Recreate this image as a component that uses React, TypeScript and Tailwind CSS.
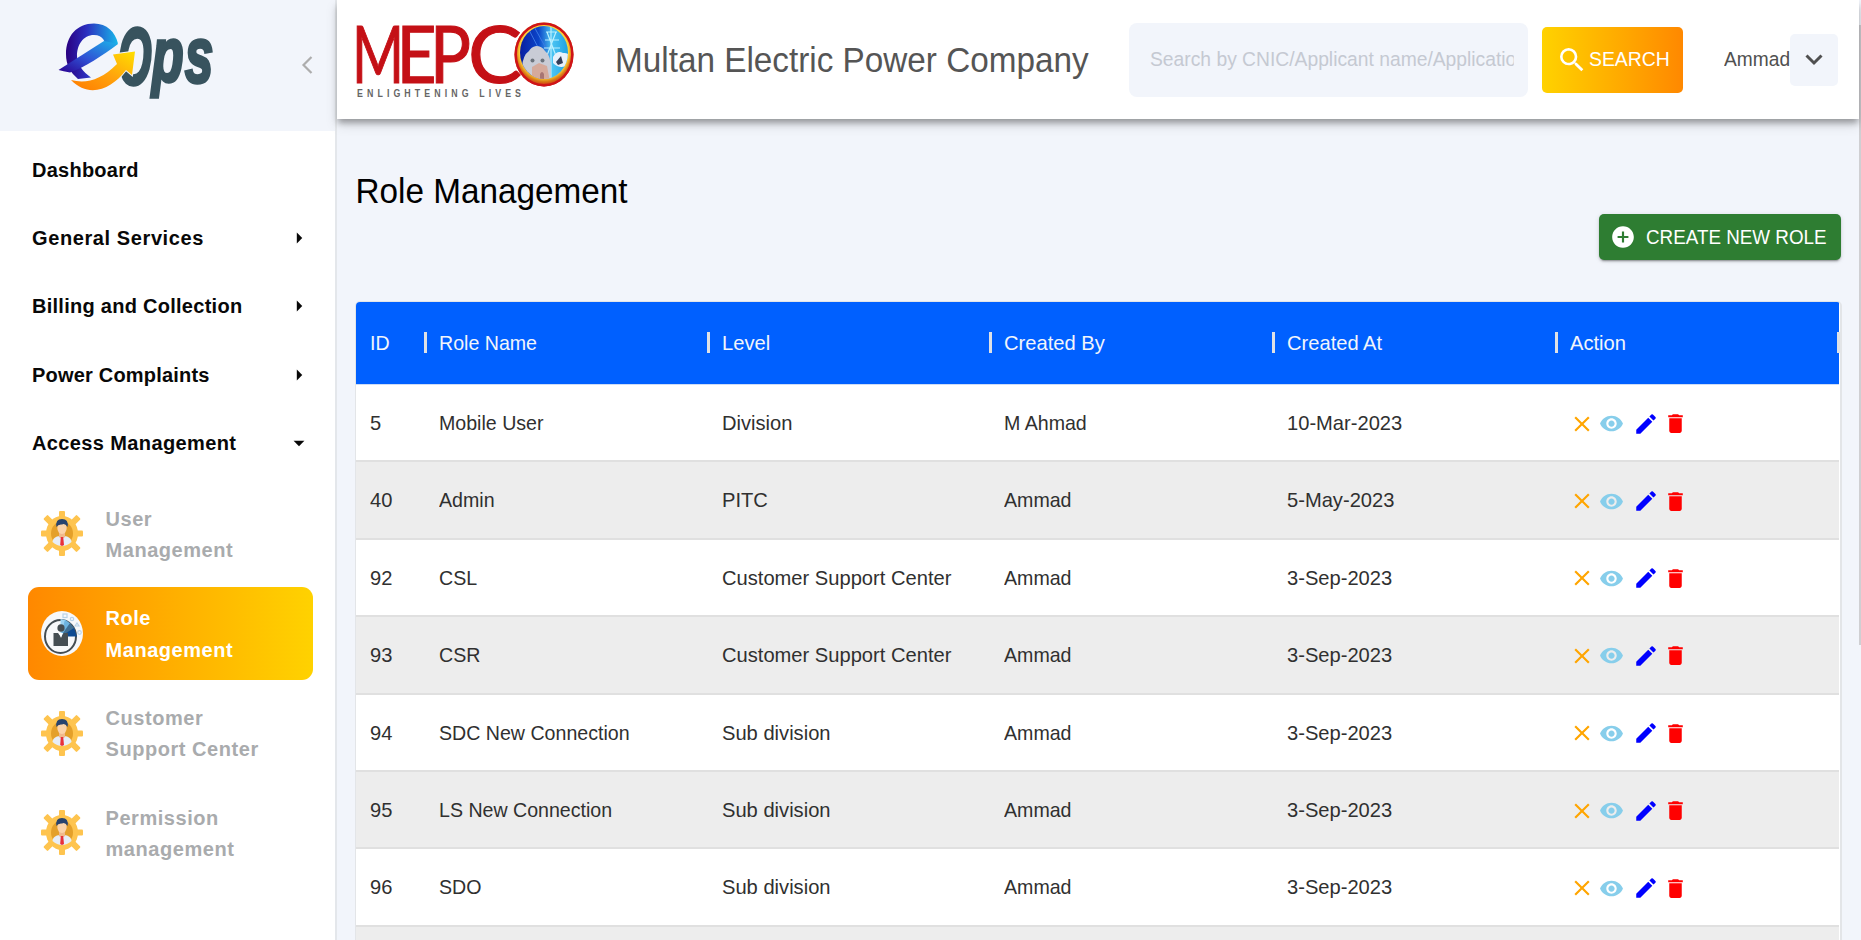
import React from "react";
import { MdSearch, MdAddCircle, MdClose, MdVisibility, MdEdit, MdDelete, MdArrowRight, MdArrowDropDown } from "react-icons/md";

const roles = [
  ["5", "Mobile User", "Division", "M Ahmad", "10-Mar-2023"],
  ["40", "Admin", "PITC", "Ammad", "5-May-2023"],
  ["92", "CSL", "Customer Support Center", "Ammad", "3-Sep-2023"],
  ["93", "CSR", "Customer Support Center", "Ammad", "3-Sep-2023"],
  ["94", "SDC New Connection", "Sub division", "Ammad", "3-Sep-2023"],
  ["95", "LS New Connection", "Sub division", "Ammad", "3-Sep-2023"],
  ["96", "SDO", "Sub division", "Ammad", "3-Sep-2023"],
];

const columns = ["ID", "Role Name", "Level", "Created By", "Created At", "Action"];

const grid = "grid grid-cols-[69.6px_282.7px_282.7px_282.7px_282.7px_282.6px]";
const tight = "inline-block origin-left scale-x-[0.942] whitespace-nowrap";
const normal = "inline-block origin-left scale-x-[0.968] whitespace-nowrap";

function EOpsLogo() {
  return (
    <svg width="164" height="90" viewBox="0 0 164 90" className="shrink-0 overflow-visible">
      <defs>
        <linearGradient id="eBlue" x1="0" y1="0" x2="1" y2="0">
          <stop offset="0" stopColor="#2a0080" />
          <stop offset="0.4" stopColor="#2b2fc0" />
          <stop offset="1" stopColor="#17b8ea" />
        </linearGradient>
        <linearGradient id="eBar" x1="0" y1="1" x2="1" y2="0">
          <stop offset="0" stopColor="#2a0090" />
          <stop offset="0.45" stopColor="#2f50d4" />
          <stop offset="1" stopColor="#1cb4ea" />
        </linearGradient>
        <linearGradient id="eArrow" x1="0" y1="1" x2="1" y2="0">
          <stop offset="0" stopColor="#ff7a00" />
          <stop offset="0.5" stopColor="#ffa30c" />
          <stop offset="1" stopColor="#ffe000" />
        </linearGradient>
      </defs>
      <g fill="#38535e" stroke="#38535e" strokeWidth="3.500" fontWeight="700" fontStyle="italic" fontFamily="Liberation Sans, sans-serif">
        <text transform="translate(62 69) scale(0.54 1)" fontSize="80">O</text>
        <text transform="translate(96 66) scale(0.68 1)" fontSize="76">p</text>
        <text transform="translate(129 67) scale(0.65 1)" fontSize="78">s</text>
      </g>
      <path d="M22 64C14 57 10 50 10 39C10 21 21 8.500 38 8.500C51 8.500 59 17 62 28.500L49 37C51 27 47 20 38 20C27 20 21 30 21 41C21 49 27 57 35 62.500L22 64Z" fill="url(#eBlue)" />
      <path d="M2.500 55L48 26L62 29C46 41 29 52 14 57.500Q7 56 2.500 55Z" fill="url(#eBar)" />
      <path d="M15 65C30 69 45 65 61 49L57 39.500L79 36.500L76 60L70 55C56 74 33 84 15 65Z" fill="url(#eArrow)" stroke="#f2f5fb" strokeWidth="2" paintOrder="stroke" />
    </svg>
  );
}

function MepcoLogo() {
  return (
    <svg width="220" height="80" viewBox="0 0 220 80" className="shrink-0 overflow-visible">
      <defs>
        <radialGradient id="ring" cx="0.5" cy="0.45" r="0.55">
          <stop offset="0.75" stopColor="#ffd43a" />
          <stop offset="0.86" stopColor="#d87a14" />
          <stop offset="1" stopColor="#cf1418" />
        </radialGradient>
        <linearGradient id="sky" x1="0" y1="0" x2="1" y2="0">
          <stop offset="0" stopColor="#0a189a" />
          <stop offset="0.4" stopColor="#0b45c8" />
          <stop offset="0.65" stopColor="#4cc4f2" />
          <stop offset="1" stopColor="#159be0" />
        </linearGradient>
        <clipPath id="disc"><ellipse cx="187" cy="32.500" rx="24" ry="26.500" /></clipPath>
      </defs>
      <g fill="#c41016" stroke="#c41016" strokeWidth="1.100" fontSize="80" fontFamily="Lato, sans-serif">
        <text x="-5" y="63" textLength="52" lengthAdjust="spacingAndGlyphs">M</text>
        <text x="39.500" y="63" textLength="40" lengthAdjust="spacingAndGlyphs">E</text>
        <text x="73" y="63" textLength="41" lengthAdjust="spacingAndGlyphs">P</text>
        <text x="111" y="63" textLength="54" lengthAdjust="spacingAndGlyphs">C</text>
      </g>
      <ellipse cx="187" cy="34.500" rx="29.500" ry="32" fill="url(#ring)" />
      <ellipse cx="187" cy="34.500" rx="28.300" ry="30.800" fill="none" stroke="#cf1418" strokeWidth="2.500" />
      <g clipPath="url(#disc)">
        <rect x="160" y="3" width="54" height="60" fill="url(#sky)" />
        <path d="M175 3L190 30M171 8L184 33" stroke="#3b78e4" strokeWidth="1" />
        <path d="M194 3V60M189 12H200M188 20H202M187 28H203M190 12L199 36M199 12L189 38" stroke="#b9f0ff" strokeWidth="1.200" fill="none" />
        <path d="M165 47Q166 35 172 31Q174 27 179 26Q185 26 188 31Q194 35 194 50V62H165Z" fill="#c9ccd6" />
        <path d="M175 62L175 47L182 43L190 46L193 62Z" fill="#d5aa9c" />
        <circle cx="175.500" cy="40.500" r="2" fill="#6d747d" />
        <circle cx="185.500" cy="40.500" r="2" fill="#6d747d" />
        <path d="M183 62V54Q185 50 187 54V62Z" fill="#a87572" />
        <path d="M196 37Q200 30 206 33Q214 32 214 43Q204 51 196 43Z" fill="#e8f1fb" />
        <path d="M199 42L204 36L206 43L201 45Z" fill="#333e58" />
      </g>
      <text transform="translate(0 77) scale(0.8 1)" textLength="205" lengthAdjust="spacing" fill="#666" fontSize="11" fontWeight="700" fontFamily="Liberation Sans, sans-serif">ENLIGHTENING LIVES</text>
    </svg>
  );
}

function GearUser() {
  return (
    <svg width="42" height="45" viewBox="0 0 42 45" className="shrink-0">
      <g fill="#fec44f">
        <rect x="18" y="0" width="6" height="45" rx="1" />
        <rect x="0" y="19.500" width="42" height="6" rx="1" />
        <rect x="18" y="-1" width="6" height="47" rx="1" transform="rotate(45 21 22.500)" />
        <rect x="18" y="-1" width="6" height="47" rx="1" transform="rotate(-45 21 22.500)" />
        <ellipse cx="21" cy="22.500" rx="16" ry="17.500" />
      </g>
      <ellipse cx="21" cy="22.500" rx="11" ry="12" fill="#e4a02a" />
      <path d="M11.500 31C12 26 16 25 21 25S30 26 30.500 31Q26 35 21 35T11.500 31Z" fill="#e6edf8" />
      <path d="M18 20H24V26L21 28L18 26Z" fill="#f0b98c" />
      <ellipse cx="21" cy="17" rx="4.700" ry="6" fill="#fbd3aa" />
      <path d="M15.500 16Q14 8 21 8Q28 8 26.500 16Q24 12 21 13.500Q17 13 15.500 16Z" fill="#27436e" />
      <path d="M19.800 26H22.200L23 34L21 35L19.200 34Z" fill="#e8303a" />
    </svg>
  );
}

function RoleBadge() {
  return (
    <svg width="42" height="45" viewBox="0 0 42 45" className="shrink-0">
      <ellipse cx="21" cy="22.500" rx="21" ry="22.500" fill="#f7f8fa" />
      <ellipse cx="19.500" cy="25.500" rx="15.500" ry="16.500" fill="none" stroke="#454d52" strokeWidth="2" />
      <path d="M19.500 25.500V8L25 9Z" fill="#9cd3f3" />
      <path d="M19.500 25.500L24 8.500L30 13Z" fill="#6db4e0" />
      <path d="M19.500 25.500L29 12L34 18Z" fill="#3f6f94" />
      <path d="M19.500 25.500L33 17L36 25.500Z" fill="#0d4a91" />
      <g fill="none" stroke="#b9d3e8" strokeWidth="1.200">
        <rect x="22" y="3" width="4" height="3.500" />
        <circle cx="31" cy="8" r="1.700" />
        <path d="M34 15L36 12L38 15Z" />
        <circle cx="38.500" cy="21.500" r="1.800" />
      </g>
      <ellipse cx="20" cy="17" rx="3.600" ry="3.800" fill="#454d52" />
      <path d="M12.500 22H17L20 26L23 22H27V35H12.500Z" fill="#454d52" />
      <path d="M18 22H22L20 27Z" fill="#fff" />
    </svg>
  );
}

function SideGroup({ label, arrow, spacing }: { label: string; arrow?: "right" | "down"; spacing: string }) {
  return (
    <div className="flex h-[68.4px] items-center justify-between pl-8 pr-[24px] text-[20px] font-bold text-[#080808]">
      <span className={spacing}>{label}</span>
      {arrow === "right" && <MdArrowRight className="size-[26px] -mr-px" />}
      {arrow === "down" && <MdArrowDropDown className="size-[26px] -mr-px" />}
    </div>
  );
}

function SideItem({ lines, active }: { lines: string[]; active?: boolean }) {
  return (
    <div
      className={
        active
          ? "flex h-[93px] items-center rounded-[11px] bg-linear-to-r from-[#ff8800] to-[#ffd200] pl-[13.5px] text-white"
          : "flex h-[93px] items-center pl-[13.5px] text-[#a9abad]"
      }
    >
      {active ? <RoleBadge /> : <GearUser />}
      <div className="ml-[22.5px] pt-[2px] text-[20px] leading-[31.3px] font-bold tracking-[0.55px]">
        {lines.map((l) => <div key={l}>{l}</div>)}
      </div>
    </div>
  );
}

export default function App() {
  return (
    <div className="flex h-[940px] w-[1861px] overflow-hidden bg-[#f2f5fb] font-['Liberation_Sans',Arial,sans-serif]">
      <aside className="flex w-[337px] shrink-0 flex-col border-r-2 border-[#e4e7eb] bg-white">
        <div className="flex h-[130.5px] shrink-0 items-start bg-[#f2f5fb] pt-[15px] pl-[56px]">
          <EOpsLogo />
          <svg width="12" height="18" viewBox="0 0 12 18" className="mt-[41px] ml-[81px]">
            <path d="M10.500 1L2.500 9L10.500 17" fill="none" stroke="#adadad" strokeWidth="2.200" />
          </svg>
        </div>
        <nav className="pt-[5px]">
          <SideGroup label="Dashboard" spacing="tracking-[0.25px]" />
          <SideGroup label="General Services" arrow="right" spacing="tracking-[0.6px]" />
          <SideGroup label="Billing and Collection" arrow="right" spacing="tracking-[0.27px]" />
          <SideGroup label="Power Complaints" arrow="right" spacing="tracking-[0.2px]" />
          <SideGroup label="Access Management" arrow="down" spacing="tracking-[0.38px]" />
          <div className="mt-[10px] ml-[27.5px] flex w-[285.5px] flex-col gap-[6.65px]">
            <SideItem lines={["User", "Management"]} />
            <SideItem lines={["Role", "Management"]} active />
            <SideItem lines={["Customer", "Support Center"]} />
            <SideItem lines={["Permission", "management"]} />
          </div>
        </nav>
      </aside>

      <div className="flex w-[1522px] shrink-0 flex-col">
        <header className="z-10 flex h-[119px] shrink-0 items-center bg-white pl-5 shadow-[0_5px_6px_-1px_rgba(0,0,0,0.3),0_6px_12px_rgba(0,0,0,0.12)]">
          <MepcoLogo />
          <h1 className="ml-[38px] w-[514px] pt-[3px] text-[34.5px] text-[#555]">
            <span className="inline-block origin-left scale-x-[0.965] whitespace-nowrap">Multan Electric Power Company</span>
          </h1>
          <div className="flex h-[74px] w-[399px] items-center rounded-lg bg-[#f2f5fb] pl-[20.5px] text-[20.5px] text-[#c5c9d2]">
            <span className="w-[387px] shrink-0 origin-left scale-x-[0.94] overflow-hidden whitespace-nowrap">Search by CNIC/Applicant name/Application</span>
          </div>
          <button className="ml-[14px] flex h-[66px] w-[141px] shrink-0 items-center rounded-[5px] bg-linear-to-r from-[#ffd200] to-[#ff8800] pl-[14px] text-[20.5px] text-white">
            <MdSearch className="size-[32px] shrink-0" />
            <span className="ml-px inline-block origin-left scale-x-[0.945]">SEARCH</span>
          </button>
          <span className="ml-[41px] w-[66px] shrink-0 text-[20.5px] text-[#505050]">
            <span className="inline-block origin-left scale-x-[0.935]">Ammad</span>
          </span>
          <button className="flex h-[52px] w-12 shrink-0 items-center justify-center rounded-[5px] bg-[#f2f5fb]">
            <svg width="18" height="12" viewBox="0 0 18 12">
              <path d="M1.500 1.500L9 9L16.500 1.500" fill="none" stroke="#505050" strokeWidth="3" />
            </svg>
          </button>
        </header>

        <main className="flex flex-col pl-[18px]">
          <h2 className="h-[95px] pt-[51px] text-[34.5px] leading-[42px] text-black">
            <span className="inline-block origin-left translate-x-[0.5px] scale-x-[0.965] whitespace-nowrap">Role Management</span>
          </h2>
          <button className="ml-auto mr-[18px] flex h-[46px] w-[242px] items-center rounded-[5px] bg-[#2e7d32] pl-[11px] text-[20.5px] text-white shadow-[0_3px_1px_-2px_rgba(0,0,0,0.2),0_2px_2px_rgba(0,0,0,0.14),0_1px_5px_rgba(0,0,0,0.12)]">
            <MdAddCircle className="size-[26px] shrink-0" />
            <span className="ml-[10px] inline-block origin-left scale-x-[0.918] whitespace-nowrap">CREATE NEW ROLE</span>
          </button>

          <section className="mt-[41px] h-[700px] w-[1487px] overflow-hidden rounded-t-[5px] border border-r-2 border-[#e3e5e8] bg-white text-[20.8px] text-[#303030]">
            <div className={`${grid} h-[83px] w-[1483px] items-center border-b border-[#cddcf5] bg-[#0060ff] pb-px text-[#f2f5fb]`}>
              {columns.map((c, i) => (
                <div key={c} className="flex h-[21px] items-center justify-between pl-[13.5px]">
                  <span className={i < 2 ? tight : normal}>{c}</span>
                  <span className="-mr-[1.5px] h-[21px] w-[3px] bg-[#dfe1e5]" />
                </div>
              ))}
            </div>
            {roles.map((r, i) => (
              <div key={r[0]} className={i % 2 ? `${grid} h-[77.4px] w-[1483px] items-center border-b-2 border-[#e0e0e0] bg-[#ededed]` : `${grid} h-[77.4px] w-[1483px] items-center border-b-2 border-[#e0e0e0]`}>
                {r.map((v, k) => (
                  <div key={k} className="pl-[13.5px]">
                    <span className={k % 2 ? tight : normal}>{v}</span>
                  </div>
                ))}
                <div className="flex items-center pt-[2px] pl-[13px]">
                  <MdClose className="size-[26px] text-[#ffa500]" />
                  <MdVisibility className="ml-[4px] size-[25px] text-[#87ceeb]" />
                  <MdEdit className="ml-[9px] size-[26px] text-[#0000ff]" />
                  <MdDelete className="ml-[4px] size-[25px] text-[#ff0000]" />
                </div>
              </div>
            ))}
            <div className="h-[20px] w-[1483px] bg-[#ededed]" />
          </section>
        </main>
      </div>
      <div className="mt-[25px] h-[620px] w-[2px] bg-[#cfcfd2]" />
    </div>
  );
}
